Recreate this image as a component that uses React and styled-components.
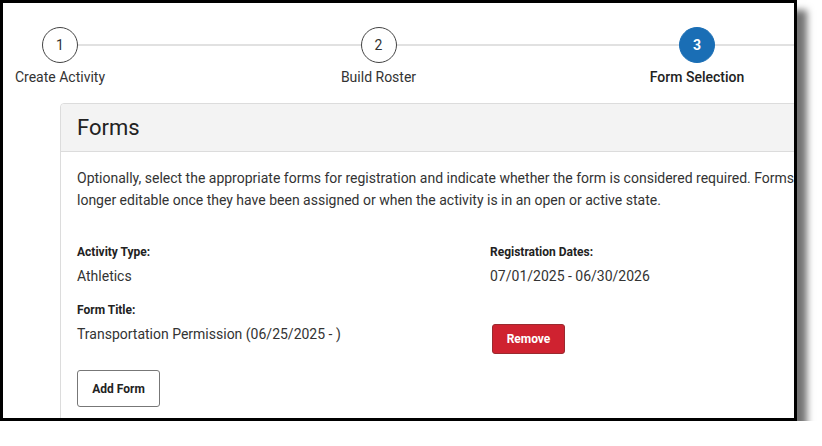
import React from "react";
import styled, { createGlobalStyle } from "styled-components";

const GlobalStyle = createGlobalStyle`
  html, body {
    margin: 0;
    padding: 0;
    background: #fff;
  }
  body {
    font-family: Roboto, "Liberation Sans", Arial, sans-serif;
    color: #333;
  }
  * { box-sizing: border-box; }
`;

const steps = [
  { num: 1, label: "Create Activity" },
  { num: 2, label: "Build Roster" },
  { num: 3, label: "Form Selection", active: true },
];

const Frame = styled.div`
  width: 797px;
  height: 421px;
  border: 3px solid #000;
  background: #fff;
  overflow: hidden;
  box-shadow: 10px 10px 7px rgba(0, 0, 0, 0.55);
`;

const Stepper = styled.div`
  display: flex;
  gap: 204.5px;
  padding-top: 24px;
`;

const Step = styled.div`
  position: relative;
  flex: none;
  width: 114px;
  display: flex;
  flex-direction: column;
  align-items: center;

  &::after {
    content: "";
    position: absolute;
    top: 17px;
    left: calc(50% + 18px);
    width: 282.5px;
    height: 2px;
    background: #e1e1e1;
  }
`;

const Circle = styled.div`
  width: 36px;
  height: 36px;
  border-radius: 50%;
  display: flex;
  align-items: center;
  justify-content: center;
  font-size: 14px;
  font-weight: ${(p) => (p.$active ? 700 : 400)};
  color: ${(p) => (p.$active ? "#fff" : "#333")};
  background: ${(p) => (p.$active ? "#1a6eb5" : "#fff")};
  border: 1px solid ${(p) => (p.$active ? "#1a6eb5" : "#444")};
`;

const StepLabel = styled.div`
  margin-top: 4px;
  font-size: 14px;
  line-height: 20px;
  white-space: nowrap;
  color: ${(p) => (p.$active ? "#222" : "#333")};
  font-weight: ${(p) => (p.$active ? 500 : 400)};
`;

const Card = styled.div`
  margin: 16px 0 0 57px;
  width: 900px;
  border: 1px solid #dcdcdc;
  border-radius: 4px;
`;

const CardHeader = styled.div`
  height: 48px;
  background: #f3f3f3;
  border-bottom: 1px solid #dcdcdc;
  display: flex;
  align-items: center;
  padding: 0 16px;
  border-radius: 4px 4px 0 0;
`;

const Title = styled.h2`
  margin: 0;
  font-size: 22px;
  font-weight: 400;
  color: #222;
`;

const CardBody = styled.div`
  padding: 15px 16px 20px;
`;

const Intro = styled.p`
  margin: 0;
  font-size: 14px;
  line-height: 22px;
  color: #333;
  white-space: nowrap;
`;

const Details = styled.div`
  display: grid;
  grid-template-columns: 413px 1fr;
  row-gap: 15px;
  margin-top: 33px;
`;

const Field = styled.div`
  display: flex;
  flex-direction: column;
  align-items: flex-start;
`;

const Label = styled.div`
  font-size: 12px;
  line-height: 16px;
  font-weight: 700;
  color: #222;
`;

const Value = styled.div`
  margin-top: 5px;
  font-size: 14px;
  line-height: 22px;
  color: #333;
`;

const Button = styled.button`
  font-family: inherit;
  font-size: 12px;
  font-weight: 700;
  border-radius: 3px;
  cursor: pointer;
  padding: 0;
  height: ${(p) => (p.$danger ? "30px" : "37px")};
  width: ${(p) => (p.$danger ? "73px" : "83px")};
  margin: ${(p) => (p.$danger ? "22px 0 0 2px" : "0")};
  background: ${(p) => (p.$danger ? "#cf2230" : "#fff")};
  color: ${(p) => (p.$danger ? "#fff" : "#222")};
  border: 1px solid ${(p) => (p.$danger ? "#9a2a2f" : "#777")};
`;

const Actions = styled.div`
  margin-top: 16px;
`;

export default function App() {
  return (
    <>
      <GlobalStyle />
      <Frame>
        <Stepper>
          {steps.map((s) => (
            <Step key={s.num}>
              <Circle $active={s.active}>{s.num}</Circle>
              <StepLabel $active={s.active}>{s.label}</StepLabel>
            </Step>
          ))}
        </Stepper>
        <Card>
          <CardHeader>
            <Title>Forms</Title>
          </CardHeader>
          <CardBody>
            <Intro>
              Optionally, select the appropriate forms for registration and indicate whether the form is considered required. Forms are no
              <br />
              longer editable once they have been assigned or when the activity is in an open or active state.
            </Intro>
            <Details>
              <Field>
                <Label>Activity Type:</Label>
                <Value>Athletics</Value>
              </Field>
              <Field>
                <Label>Registration Dates:</Label>
                <Value>07/01/2025 - 06/30/2026</Value>
              </Field>
              <Field>
                <Label>Form Title:</Label>
                <Value>Transportation Permission (06/25/2025 - )</Value>
              </Field>
              <Field>
                <Button $danger>Remove</Button>
              </Field>
            </Details>
            <Actions>
              <Button>Add Form</Button>
            </Actions>
          </CardBody>
        </Card>
      </Frame>
    </>
  );
}
